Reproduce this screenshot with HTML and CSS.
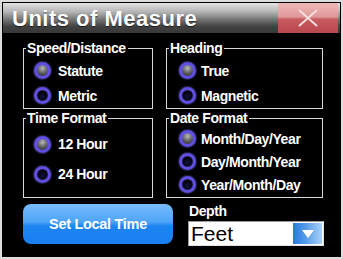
FILE: index.html
```html
<!DOCTYPE html>
<html lang="en">
<head>
    <meta charset="UTF-8">
    <title>Units of Measure</title>
    <link rel="stylesheet" href="styles.css">
</head>
<body>

    <div class="window">
        <div class="titlebar">
            <div class="title">Units of Measure</div>
            <div class="close">
                <svg width="22" height="18" viewBox="0 0 22 18">
                    <line x1="2" y1="1" x2="20" y2="17" stroke="#f6dede" stroke-width="2"/>
                    <line x1="20" y1="1" x2="2" y2="17" stroke="#f6dede" stroke-width="2"/>
                </svg>
            </div>
        </div>

        <div class="groups">
            <fieldset class="group">
                <legend>Speed/Distance</legend>
                <div class="opts opts-speed left">
                    <div class="opt"><span class="radio on"></span>Statute</div>
                    <div class="opt"><span class="radio"></span>Metric</div>
                </div>
            </fieldset>

            <fieldset class="group">
                <legend>Heading</legend>
                <div class="opts opts-speed right">
                    <div class="opt"><span class="radio on"></span>True</div>
                    <div class="opt"><span class="radio"></span>Magnetic</div>
                </div>
            </fieldset>

            <fieldset class="group">
                <legend>Time Format</legend>
                <div class="opts opts-time left">
                    <div class="opt"><span class="radio on"></span>12 Hour</div>
                    <div class="opt"><span class="radio"></span>24 Hour</div>
                </div>
            </fieldset>

            <fieldset class="group">
                <legend>Date Format</legend>
                <div class="opts opts-date right">
                    <div class="opt"><span class="radio on"></span>Month/Day/Year</div>
                    <div class="opt"><span class="radio"></span>Day/Month/Year</div>
                    <div class="opt"><span class="radio"></span>Year/Month/Day</div>
                </div>
            </fieldset>
        </div>

        <div class="bottom">
            <div class="btn">Set Local Time</div>
            <div class="depth">
                <div class="depth-label">Depth</div>
                <div class="select">
                    <span class="select-value">Feet</span>
                    <span class="select-arrow">
                        <svg width="14" height="10" viewBox="0 0 14 10">
                            <polygon points="1,1 13,1 7,9" fill="#ffffff"/>
                        </svg>
                    </span>
                </div>
            </div>
        </div>
    </div>

</body>
</html>
```

FILE: styles.css
```css
body {
    margin: 0;
    background-color: #dcdcdc;
    font-family: "Liberation Sans", Arial, sans-serif;
    color: #fff;
}
.window {
    margin: 2px;
    width: 339px;
    height: 255px;
    box-sizing: border-box;
    padding: 1px;
    background-color: #000;
}
.titlebar {
    display: flex;
    height: 30px;
    background: linear-gradient(#e2e2e2 0%, #b4b4b4 30%, #727272 56%, #424242 78%, #383838 100%);
}
.title {
    flex: 1;
    padding-left: 9px;
    font-weight: bold;
    font-size: 22px;
    letter-spacing: 0.5px;
    line-height: 31px;
    text-shadow: 0 1px 1px rgba(0, 0, 0, 0.6);
}
.close {
    width: 60px;
    margin-right: 2px;
    display: flex;
    align-items: center;
    justify-content: center;
    background: linear-gradient(#f0b8b8 0%, #e09a9a 45%, #c65a5e 55%, #b84850 100%);
}
.groups {
    display: grid;
    grid-template-columns: 130px 157px;
    column-gap: 13px;
    row-gap: 2px;
    margin-top: 8px;
    padding-left: 20px;
}
.group {
    margin: 0;
    padding: 0;
    min-width: 0;
    border: 1px solid #d8d8d8;
}
.group legend {
    margin-left: 2px;
    padding: 0 2px 0 1px;
    font-weight: bold;
    font-size: 14px;
    letter-spacing: -0.4px;
    line-height: 14px;
}
.opts.left {
    padding-left: 10px;
}
.opts.left .opt {
    gap: 7px;
}
.opts.right {
    padding-left: 12px;
}
.opts.right .opt {
    gap: 5px;
}
.opts-speed {
    padding-top: 3px;
}
.opts-speed .opt {
    height: 25px;
}
.opts-time {
    padding-top: 4px;
    padding-bottom: 8px;
}
.opts-time .opt {
    height: 30px;
}
.opts-date {
    padding-top: 2px;
    padding-bottom: 1px;
}
.opts-date .opt {
    height: 23px;
}
.opt {
    display: flex;
    align-items: center;
    font-weight: bold;
    font-size: 14px;
    letter-spacing: -0.4px;
}
.radio {
    width: 11px;
    height: 11px;
    border: 3px solid #5f4fe4;
    border-radius: 50%;
    background: radial-gradient(circle at 50% 60%, #12123e, #000 70%);
    box-shadow: 0 0 2px #8a7cf4, inset 0 0 1px #9a8cf8;
    flex-shrink: 0;
}
.radio.on {
    background: radial-gradient(circle at 50% 30%, #bcbcbc 0%, #727272 40%, #2a2a2a 85%);
}
.bottom {
    display: flex;
    gap: 15px;
    margin-top: 6px;
    padding-left: 20px;
}
.btn {
    width: 150px;
    height: 40px;
    border-radius: 8px;
    background: linear-gradient(#78bcfc 0%, #4ea4f6 45%, #1d84f2 55%, #1a80f0 100%);
    font-weight: bold;
    font-size: 14.5px;
    letter-spacing: -0.3px;
    line-height: 40px;
    text-align: center;
}
.depth {
    width: 136px;
    margin-top: -1px;
}
.depth-label {
    font-weight: bold;
    font-size: 14px;
    letter-spacing: -0.4px;
    line-height: 16px;
    height: 18px;
    padding-left: 1px;
}
.select {
    display: flex;
    height: 25px;
    box-sizing: border-box;
    border: 1px solid #9a9a9a;
    border-bottom-color: #e0e0e0;
    border-right-color: #e0e0e0;
    background-color: #fff;
}
.select-value {
    flex: 1;
    padding-left: 2px;
    font-size: 21px;
    line-height: 23px;
    color: #000;
}
.select-arrow {
    width: 29px;
    margin: 1px;
    display: flex;
    align-items: center;
    justify-content: center;
    background: linear-gradient(90deg, #2a78da 0%, #4a94e8 35%, #a8d0f6 100%);
}
```
